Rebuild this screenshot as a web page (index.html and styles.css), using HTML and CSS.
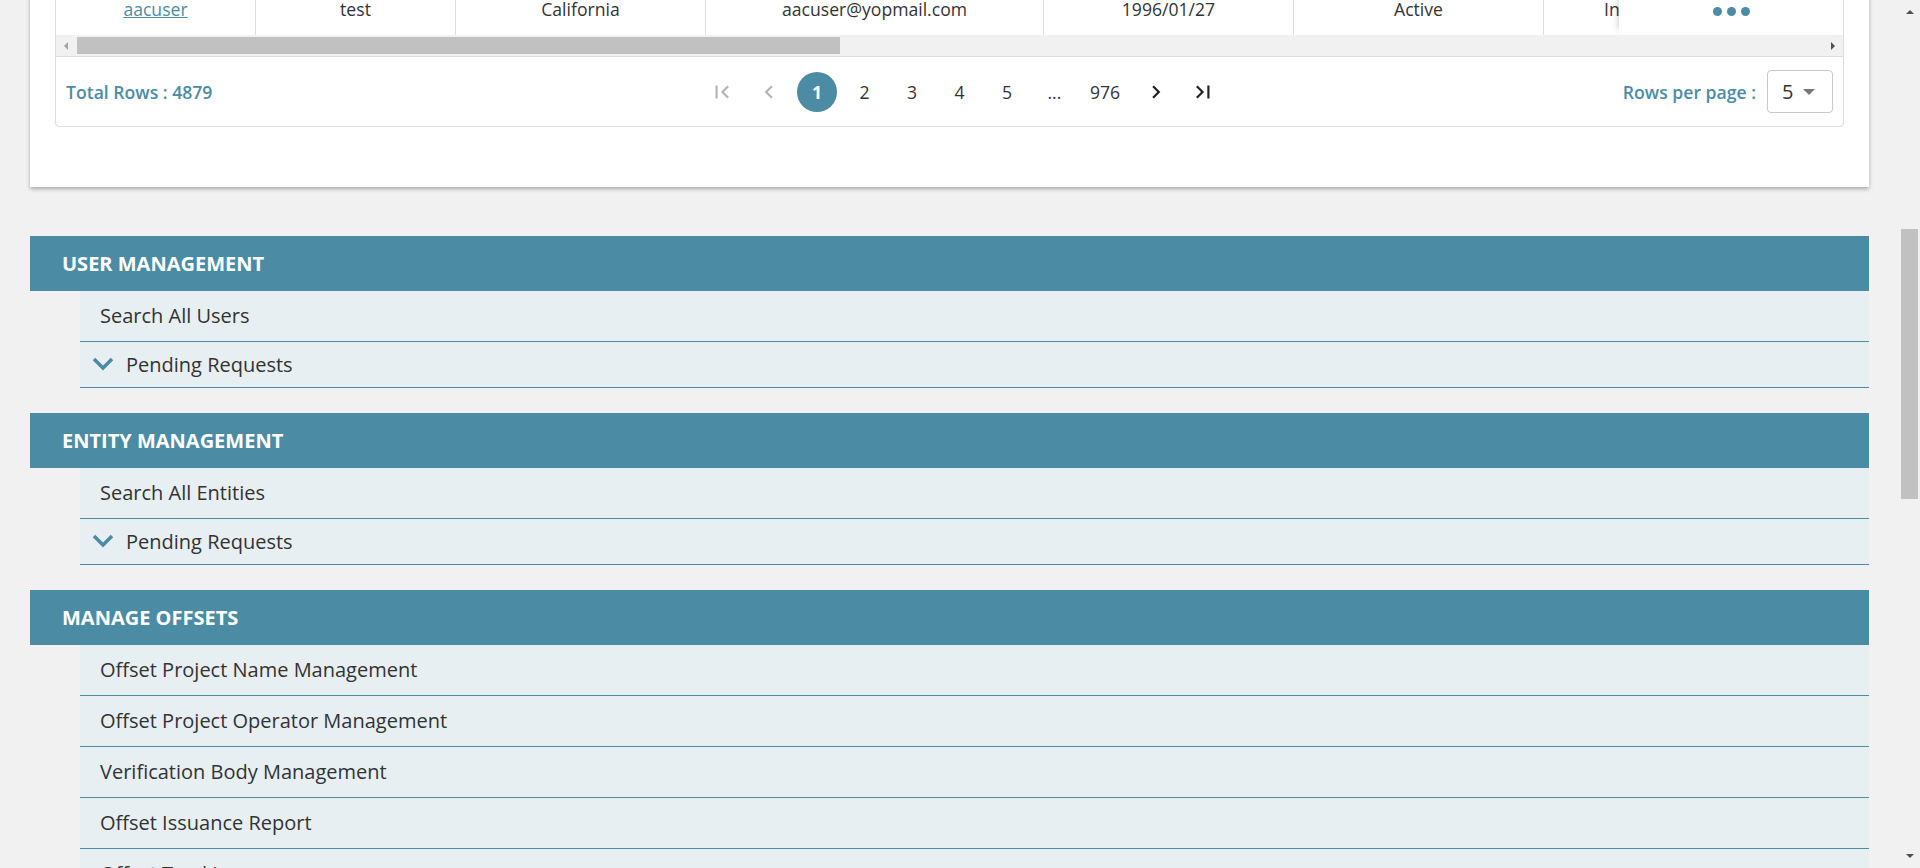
FILE: index.html
```html
<!DOCTYPE html>
<html lang="en">
<head>
<meta charset="utf-8">
<title>Admin</title>
<link rel="stylesheet" href="styles.css">
</head>
<body>
<div class="viewport">
  <main class="page">
    <section class="card">
      <div class="panel">
        <div class="table-row">
          <div class="cell w200"><a class="user-link" href="#">aacuser</a></div>
          <div class="cell w200">test</div>
          <div class="cell w250">California</div>
          <div class="cell w338">aacuser@yopmail.com</div>
          <div class="cell w250">1996/01/27</div>
          <div class="cell w250">Active</div>
          <div class="cell cell-clip">Individual</div>
          <div class="cell cell-sticky">
            <span class="dots"><i></i><i></i><i></i></span>
          </div>
        </div>
        <div class="hscroll">
          <span class="arr arr-left"></span>
          <div class="hscroll-track"><div class="hscroll-thumb"></div></div>
          <span class="arr arr-right"></span>
        </div>
        <div class="table-footer">
          <div class="total">Total Rows : 4879</div>
          <div class="pager">
            <span class="pg pg-icon pg-disabled"><svg viewBox="0 0 24 24"><path d="M18.41 16.59L13.82 12l4.59-4.59L17 6l-6 6 6 6zM6 6h2v12H6z"/></svg></span>
            <span class="pg pg-icon pg-disabled"><svg viewBox="0 0 24 24"><path d="M15.41 7.41L14 6l-6 6 6 6 1.41-1.41L10.83 12z"/></svg></span>
            <span class="pg pg-active">1</span>
            <span class="pg">2</span>
            <span class="pg">3</span>
            <span class="pg">4</span>
            <span class="pg">5</span>
            <span class="pg">...</span>
            <span class="pg pg-wide">976</span>
            <span class="pg pg-icon"><svg viewBox="0 0 24 24"><path d="M10 6L8.59 7.41 13.17 12l-4.58 4.59L10 18l6-6z"/></svg></span>
            <span class="pg pg-icon"><svg viewBox="0 0 24 24"><path d="M5.59 7.41L10.18 12l-4.59 4.59L7 18l6-6-6-6zM16 6h2v12h-2z"/></svg></span>
          </div>
          <div class="rpp">
            <span class="rpp-label">Rows per page :</span>
            <div class="select"><span>5</span><i class="caret"></i></div>
          </div>
        </div>
      </div>
    </section>

    <nav class="menu">
      <section class="menu-group">
        <h2 class="menu-title">USER MANAGEMENT</h2>
        <ul class="menu-list">
          <li class="menu-item">Search All Users</li>
          <li class="menu-item menu-toggle"><svg class="chev" viewBox="0 0 22 14"><path d="M2 2l9 9 9-9"/></svg>Pending Requests</li>
        </ul>
      </section>
      <section class="menu-group">
        <h2 class="menu-title">ENTITY MANAGEMENT</h2>
        <ul class="menu-list">
          <li class="menu-item">Search All Entities</li>
          <li class="menu-item menu-toggle"><svg class="chev" viewBox="0 0 22 14"><path d="M2 2l9 9 9-9"/></svg>Pending Requests</li>
        </ul>
      </section>
      <section class="menu-group">
        <h2 class="menu-title">MANAGE OFFSETS</h2>
        <ul class="menu-list">
          <li class="menu-item">Offset Project Name Management</li>
          <li class="menu-item">Offset Project Operator Management</li>
          <li class="menu-item">Verification Body Management</li>
          <li class="menu-item">Offset Issuance Report</li>
          <li class="menu-item">Offset Tracking</li>
        </ul>
      </section>
    </nav>
  </main>
  <div class="vscroll">
    <div class="vs-btn"><span class="arr arr-up"></span></div>
    <div class="vs-track"><div class="vs-thumb"></div></div>
    <div class="vs-btn"><span class="arr arr-down"></span></div>
  </div>
</div>
</body>
</html>
```

FILE: styles.css
```css
* { box-sizing: border-box; }

html, body {
  margin: 0;
  height: 868px;
  overflow: hidden;
  background: #f1f1f1;
  font-family: "Open Sans", "DejaVu Sans", sans-serif;
  color: #333;
}

.viewport {
  display: flex;
  height: 868px;
  overflow: hidden;
}

.page {
  flex: 1;
  min-width: 0;
  padding: 0 32px 0 30px;
}

/* ---------- card with table ---------- */
.card {
  margin-top: -16px;
  background: #fff;
  padding: 0 25px 60px 25px;
  box-shadow: 0 2px 4px rgba(0, 0, 0, 0.3);
}

.panel {
  border: 1px solid #ddd;
  border-radius: 0 0 4px 4px;
  overflow: hidden;
}

.table-row {
  display: flex;
  height: 50px;
  background: #fff;
}

.cell {
  flex: none;
  display: flex;
  align-items: center;
  justify-content: center;
  padding-bottom: 3px;
  font-size: 17.6px;
  line-height: 16px;
  color: #333;
  border-right: 1px solid #ddd;
  white-space: nowrap;
}
.w200 { width: 200px; }
.w250 { width: 250px; }
.w338 { width: 338px; }

.cell-clip {
  flex: 1;
  min-width: 0;
  overflow: hidden;
  justify-content: flex-start;
  padding-left: 60px;
  border-right: none;
}

.cell-sticky {
  width: 224px;
  border-right: none;
  background: #fff;
  box-shadow: -6px 0 6px -5px rgba(0, 0, 0, 0.18);
  position: relative;
}

.user-link {
  color: #4b8ca4;
  text-decoration: underline;
}

.dots {
  display: flex;
  gap: 5px;
  margin-top: 6px;
}
.dots i {
  width: 9px;
  height: 9px;
  border-radius: 50%;
  background: #4b8ca4;
}

/* horizontal scrollbar */
.hscroll {
  display: flex;
  align-items: center;
  height: 21px;
  background: #f1f1f1;
}
.hscroll-track {
  flex: 1;
  height: 100%;
  padding-top: 2px;
}
.hscroll-thumb {
  margin-left: 9px;
  width: 763px;
  height: 17px;
  background: #c1c1c1;
}
.arr {
  display: block;
  width: 0;
  height: 0;
  border-style: solid;
}
.arr-left {
  margin: 0 0 0 8px;
  border-width: 4px 4px 4px 0;
  border-color: transparent #a3a3a3 transparent transparent;
}
.arr-right {
  margin: 0 8px 0 0;
  border-width: 4px 0 4px 4px;
  border-color: transparent transparent transparent #505050;
}

/* footer */
.table-footer {
  display: flex;
  align-items: center;
  height: 70px;
  border-top: 1px solid #ddd;
  padding: 0 10px;
}
.total {
  flex: 1;
  color: #4b8ca4;
  font-size: 17.6px;
  font-weight: 600;
}
.pager {
  display: flex;
  align-items: center;
  gap: 7.5px;
  margin-left: 26px;
}
.pg {
  min-width: 40px;
  height: 40px;
  padding: 0 10px;
  border-radius: 20px;
  display: flex;
  align-items: center;
  justify-content: center;
  font-size: 17.6px;
  color: #333;
}
.pg-wide { padding: 0 8px; }
.pg-icon { padding: 0; }
.pg-icon svg {
  width: 26px;
  height: 26px;
  fill: #222;
}
.pg-disabled svg { fill: #b3b3b3; }
.pg-active {
  background: #4b8ca4;
  color: #fff;
  font-weight: 700;
}

.rpp {
  flex: 1;
  display: flex;
  align-items: center;
  justify-content: flex-end;
  gap: 11px;
}
.rpp-label {
  color: #4b8ca4;
  font-size: 17.6px;
  font-weight: 600;
}
.select {
  width: 66px;
  height: 43px;
  border: 1px solid #c8c8c8;
  border-radius: 4px;
  display: flex;
  align-items: center;
  padding-left: 14px;
  gap: 10px;
  font-size: 20px;
  color: #333;
}
.caret {
  width: 0;
  height: 0;
  border-style: solid;
  border-width: 6px 6px 0 6px;
  border-color: #777 transparent transparent transparent;
}

/* ---------- menu ---------- */
.menu {
  margin-top: 49px;
}
.menu-group {
  margin-bottom: 25px;
}
.menu-title {
  margin: 0;
  height: 55px;
  display: flex;
  align-items: center;
  padding-left: 32px;
  background: #4b8ca4;
  color: #fff;
  font-size: 20px;
  font-weight: 700;
}
.menu-list {
  list-style: none;
  margin: 0 0 0 50px;
  padding: 0;
}
.menu-item {
  height: 51px;
  display: flex;
  align-items: center;
  padding-left: 20px;
  padding-bottom: 1px;
  background: #e7eff2;
  border-bottom: 1px solid #4b8ca4;
  font-size: 20px;
  color: #333;
}
.menu-toggle {
  height: 46px;
  padding-left: 12px;
  gap: 12px;
}
.chev {
  width: 22px;
  height: 14px;
  fill: none;
  stroke: #4b8ca4;
  stroke-width: 3.5;
}

/* ---------- page scrollbar ---------- */
.vscroll {
  flex: none;
  width: 17px;
  margin-right: 2px;
  display: flex;
  flex-direction: column;
  background: #f1f1f1;
}
.vs-btn {
  height: 24px;
  display: flex;
  align-items: center;
  justify-content: center;
}
.vs-track {
  flex: 1;
}
.vs-thumb {
  margin-top: 205px;
  height: 270px;
  background: #c1c1c1;
}
.arr-up {
  border-width: 0 4px 4px 4px;
  border-color: transparent transparent #505050 transparent;
}
.arr-down {
  border-width: 4px 4px 0 4px;
  border-color: #505050 transparent transparent transparent;
}
```
